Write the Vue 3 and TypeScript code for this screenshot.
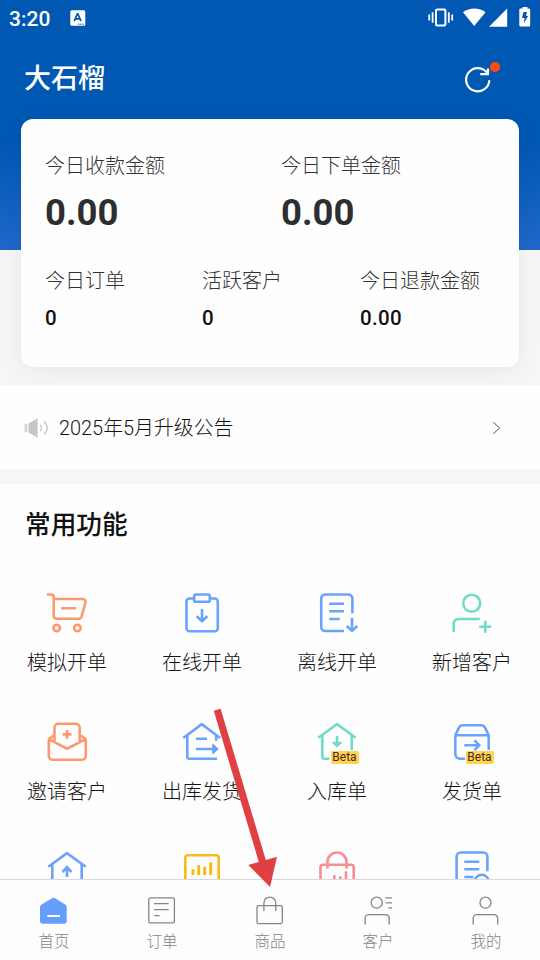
<script setup lang="ts">
interface Stat { label: string; value: string }
interface Feature { label: string; icon: string; tone: string; beta?: boolean }
interface Tab { label: string; icon: string; active?: boolean }

const totals: Stat[] = [
  { label: '今日收款金额', value: '0.00' },
  { label: '今日下单金额', value: '0.00' },
]
const details: Stat[] = [
  { label: '今日订单', value: '0' },
  { label: '活跃客户', value: '0' },
  { label: '今日退款金额', value: '0.00' },
]
const features: Feature[] = [
  { label: '模拟开单', icon: 'cart', tone: 'orange' },
  { label: '在线开单', icon: 'clipboard', tone: 'blue' },
  { label: '离线开单', icon: 'offline', tone: 'blue' },
  { label: '新增客户', icon: 'adduser', tone: 'teal' },
  { label: '邀请客户', icon: 'invite', tone: 'orange' },
  { label: '出库发货', icon: 'outbound', tone: 'blue' },
  { label: '入库单', icon: 'inbound', tone: 'teal', beta: true },
  { label: '发货单', icon: 'box', tone: 'blue', beta: true },
  { label: '', icon: 'houseup', tone: 'blue' },
  { label: '', icon: 'chart', tone: 'amber' },
  { label: '', icon: 'bag', tone: 'pink' },
  { label: '', icon: 'search', tone: 'blue' },
]
const tabs: Tab[] = [
  { label: '首页', icon: 'home', active: true },
  { label: '订单', icon: 'orders' },
  { label: '商品', icon: 'goods' },
  { label: '客户', icon: 'customers' },
  { label: '我的', icon: 'me' },
]
</script>

<template>
  <div class="screen">
    <header class="hero">
      <div class="status">
        <span class="clock">3:20</span>
        <svg class="ime" width="16" height="16" viewBox="0 0 16 16">
          <rect x="0.3" y="0.3" width="15" height="15.4" rx="1.5" fill="#fff" />
          <path d="M4.2 11.2 7.3 3.8h.6l3.1 7.4M5.2 8.8h4.8" fill="none" stroke="#0058b2" stroke-width="1.7" />
          <path d="M8 14.2h6" stroke="#0058b2" stroke-width="1" stroke-dasharray="1.4 .8" />
        </svg>
        <svg class="system" width="104" height="24" viewBox="0 0 104 24">
          <g fill="none" stroke="#fff">
            <rect x="8" y="4.400" width="9.400" height="16" rx="1.200" stroke-width="2" />
            <path d="M4.600 7.200v10.600M20.800 7.200v10.600" stroke-width="1.800" />
            <path d="M1.200 9.500v6M24.200 9.500v6" stroke-width="1.800" />
          </g>
          <g fill="#fff">
            <path d="M35 7.200C41.500 2.300 51.300 2.300 57.500 7.200L46.200 21Z" />
            <path d="M61 21.800 79.200 3.500V21.800Z" />
            <path d="M92.500 3.500h2V2h5v1.500h1.500a1.200 1.200 0 0 1 1.200 1.200v15.600a1.200 1.200 0 0 1-1.200 1.200h-8.500a1.200 1.200 0 0 1-1.200-1.200V4.700a1.200 1.200 0 0 1 1.200-1.200Z" />
          </g>
          <path d="M95.500 7h3.500l-.9 4h2l-4.300 7.500.9-5.500h-2.700Z" fill="#0058b2" />
        </svg>
      </div>
      <div class="titlebar">
        <h1>大石榴</h1>
        <svg class="refresh" width="38" height="36" viewBox="0 0 38 36">
          <path d="M25.500 12.500A11.600 11.600 0 1 0 27.300 19.200" fill="none" stroke="#fff" stroke-width="2.200" />
          <path d="M26 7.500v5.600h-7.800" fill="none" stroke="#fff" stroke-width="2.200" />
          <circle cx="33" cy="6" r="5.100" fill="#ff4a0c" />
        </svg>
      </div>
    </header>

    <section class="card">
      <div class="totals">
        <div v-for="s in totals" :key="s.label" class="stat">
          <span class="label">{{ s.label }}</span>
          <strong class="big">{{ s.value }}</strong>
        </div>
      </div>
      <div class="details">
        <div v-for="s in details" :key="s.label" class="stat">
          <span class="label">{{ s.label }}</span>
          <strong class="small">{{ s.value }}</strong>
        </div>
      </div>
    </section>

    <section class="notice">
      <svg width="26" height="22" viewBox="0 0 26 22">
        <path d="M4.500 6.600 13.600 1.200v19.600L4.500 15.600Z" fill="#c6c6c6" />
        <path d="M2.700 7.200H1.500c-.7 2-.7 5.600 0 7.600h1.200Z" fill="none" stroke="#c6c6c6" stroke-width="1" />
        <path d="M16.300 7.800c1.500 2 1.500 4.400 0 6.400M20 4.600c4.200 3.800 4.200 9 0 12.800" fill="none" stroke="#c6c6c6" stroke-width="1.300" />
      </svg>
      <span class="headline">2025年5月升级公告</span>
      <svg width="10" height="14" viewBox="0 0 10 14">
        <path d="M1.200 1.200 7.700 7 1.200 12.800" fill="none" stroke="#555" stroke-width="1" />
      </svg>
    </section>

    <section class="functions">
      <h2>常用功能</h2>
      <div class="grid">
        <div v-for="f in features" :key="f.icon" class="feature">
          <div class="pic" :class="f.tone">
            <svg width="48" height="48" viewBox="0 0 48 48" fill="none" stroke="currentColor" stroke-width="2.600">
              <g v-if="f.icon === 'cart'">
                <path d="M4 5.500h4.200q2.500 0 2.500 2.500v18.700a3 3 0 0 0 3 3h22a3 3 0 0 0 2.900-2.200l3.900-14.200a2.600 2.600 0 0 0-2.500-3.300H10.700M18 19.300h15" />
                <circle cx="13.700" cy="39" r="3.300" /><circle cx="34.400" cy="39" r="3.300" />
              </g>
              <g v-else-if="f.icon === 'clipboard'">
                <path d="M16 9.500h-4.500a3 3 0 0 0-3 3v26.700a3 3 0 0 0 3 3h25.300a3 3 0 0 0 3-3V12.500a3 3 0 0 0-3-3H32" />
                <rect x="16.200" y="5.500" width="15.600" height="7.300" rx="1.600" />
                <path d="M24 20v12.500M18.700 27.300l5.300 5 5.300-5" />
              </g>
              <g v-else-if="f.icon === 'offline'">
                <path d="M31 42H12.200a4 4 0 0 1-4-4V9.500a4 4 0 0 1 4-4h23.200a4 4 0 0 1 4 4v15M16.300 14.700H31M16.300 22.300H31M16.300 30h10.400M39 28.700v13M33.600 37l5.400 4.800 5.400-4.800" />
              </g>
              <g v-else-if="f.icon === 'adduser'">
                <circle cx="23.700" cy="14.300" r="8.500" />
                <path d="M5.700 43v-8.500a4.500 4.500 0 0 1 4.500-4.500h21.500M37.300 31.700v12M31.300 37.700h12" />
              </g>
              <g v-else-if="f.icon === 'invite'">
                <path d="M11.500 25V9.500a3.800 3.800 0 0 1 3.800-3.800h17.600a3.800 3.800 0 0 1 3.800 3.800V25M11.500 17l-4.700 3.300a2.500 2.500 0 0 0-1 2V38.200a3.500 3.500 0 0 0 3.500 3.500h30a3.500 3.500 0 0 0 3.500-3.500V22.300a2.500 2.500 0 0 0-1-2L36.700 17M6.500 21.300 22.500 30q1.500.8 3 0l16.500-8.700M24.100 12v8.800M19.700 16.400h8.800" />
              </g>
              <g v-else-if="f.icon === 'outbound'">
                <path d="M5.300 20 23.700 6.200 42.200 20M9.300 17.500v21a2.200 2.200 0 0 0 2.200 2.200H39M38.200 17v5.700M18 20.700h11M18 31h19" />
                <path d="m34.800 26.200 5.500 4.800-5.500 4.800Z" fill="currentColor" stroke-width="1" />
              </g>
              <g v-else-if="f.icon === 'inbound'">
                <path d="M5.300 19.800 24 6.200l18.700 13.600M9.300 17.500v21a2.200 2.200 0 0 0 2.200 2.200h5M38.700 17.500V32M24 18v8" />
                <path d="m19.300 24.300 4.700 5 4.700-5Z" fill="currentColor" stroke-width="1" />
              </g>
              <g v-else-if="f.icon === 'box'">
                <path d="M7.300 17.200 11 9.500a4 4 0 0 1 3.500-2.200h19A4 4 0 0 1 37 9.500l3.700 7.700V32M7.300 17.200V36a4.700 4.700 0 0 0 4.700 4.700h5M7.300 17.200h33.400M16.300 27.200h14M26.500 22.300l4.800 4.900-4.800 4.900" />
              </g>
              <g v-else-if="f.icon === 'houseup'">
                <path d="M5.300 19.800 24 6.200l18.700 13.600M9.300 17.500V42h29.400V17.500M24 30V20M19.500 25l4.500-4.800 4.500 4.800" />
              </g>
              <g v-else-if="f.icon === 'chart'">
                <rect x="7.300" y="8.200" width="33.400" height="25.600" rx="2.600" />
                <path d="M15 22.300V28M20.700 18V28M26.700 19.800V28M32.700 15.300V28" stroke-width="3" />
              </g>
              <g v-else-if="f.icon === 'bag'">
                <path d="M10 17.700h28.200a2.500 2.500 0 0 1 2.500 2.500V42H7.500V20.200a2.500 2.500 0 0 1 2.500-2.500ZM14.500 21.500V15a9.500 9.500 0 0 1 19 0v6.500M21.300 28.300v4M27.300 29.300v4M33 24.300v9" />
              </g>
              <g v-else>
                <path d="M24 42H12.600a4 4 0 0 1-4-4V9.500a4 4 0 0 1 4-4h22.800a4 4 0 0 1 4 4V24.200M16.300 14.700h15M16.300 22.300h15M16.300 30h9" />
                <circle cx="33.700" cy="34.800" r="7" />
              </g>
            </svg>
            <span v-if="f.beta" class="beta">Beta</span>
          </div>
          <span class="name">{{ f.label }}</span>
        </div>
      </div>
    </section>

    <nav class="tabs">
      <div v-for="t in tabs" :key="t.icon" class="tab" :class="{ active: t.active }">
        <svg width="28" height="30" viewBox="0 0 28 30" fill="none" stroke="currentColor" stroke-width="1.300">
          <g v-if="t.icon === 'home'">
            <path d="M12 2.300a3 3 0 0 1 3.200 0l10 6.200a3 3 0 0 1 1.500 2.600V25a2.800 2.800 0 0 1-2.800 2.800H2.800A2.800 2.800 0 0 1 0 25V11.100a3 3 0 0 1 1.500-2.600Z" fill="currentColor" stroke="none" />
            <path d="M7.300 20H20" stroke="#fff" stroke-width="2" />
          </g>
          <g v-else-if="t.icon === 'orders'">
            <rect x=".8" y="1.900" width="25.600" height="25" rx="1.500" />
            <path d="M6 7.700h14.700M6 13.600h14.700M6 19.600h5.600" />
          </g>
          <g v-else-if="t.icon === 'goods'">
            <rect x="1" y="9.700" width="25.300" height="17.900" rx="1.500" />
            <path d="M7.900 15V7a5.900 5.900 0 0 1 11.800 0v8" />
          </g>
          <g v-else-if="t.icon === 'customers'">
            <circle cx="12.700" cy="6.700" r="5.500" />
            <path d="M1.200 28.500v-6.300a3.500 3.500 0 0 1 3.500-3.500h17a3.500 3.500 0 0 1 3.500 3.500v6.300M21.300 1.800H28M21.800 6.800H28M24.300 11.800H28" />
          </g>
          <g v-else>
            <circle cx="13.500" cy="6.700" r="5.500" />
            <path d="M1.200 28.500v-6.300a3.500 3.500 0 0 1 3.500-3.500h17.500a3.500 3.500 0 0 1 3.500 3.500v6.300" />
          </g>
        </svg>
        <span>{{ t.label }}</span>
      </div>
    </nav>

    <svg class="pointer" width="66" height="180" viewBox="212 708 66 180">
      <path d="M213.800 710.700 220.600 708.700 265.800 860 277 856.700 270 887 248.300 865 258.800 862Z" fill="#e04041" />
    </svg>
  </div>
</template>

<style>
body { margin: 0; }
</style>

<style scoped>
.screen {
  position: relative;
  display: flex;
  flex-direction: column;
  width: 540px;
  height: 960px;
  overflow: hidden;
  background: #f6f6f6;
  font-family: Roboto, "Noto Sans CJK SC", sans-serif;
  color: #151515;
}
.hero {
  flex: none;
  height: 250px;
  background: linear-gradient(#0058b2 0, #0058b2 140px, #1f68ca 250px);
  color: #fff;
}
.status {
  display: flex;
  align-items: center;
  height: 36px;
  padding: 0 8px 0 9px;
}
.clock { width: 61px; font-size: 21px; line-height: 36px; font-weight: 500; padding-top: 2px; }
.system { margin-left: auto; margin-top: -2px; }
.titlebar {
  display: flex;
  align-items: center;
  justify-content: space-between;
  height: 83px;
  padding: 0 40px 0 24px;
}
h1 { margin: 3px 0 0; font-size: 27px; line-height: 40px; font-weight: 500; }
.refresh { margin-top: 2px; }
.card {
  flex: none;
  position: relative;
  box-sizing: border-box;
  height: 248px;
  margin: -131px 21px 18px;
  padding: 31px 0 0 24px;
  border-radius: 12px;
  background: #fefefe;
  box-shadow: 0 4px 24px rgba(0, 0, 0, .06);
}
.totals { display: grid; grid-template-columns: 236px 1fr; height: 115px; }
.details { display: grid; grid-template-columns: 157px 158px 1fr; }
.stat { display: flex; flex-direction: column; }
.label { font-size: 20px; line-height: 32px; font-weight: 300; color: #333; }
.big { font: 700 36.5px/48px Roboto, sans-serif; color: #2d2e30; margin-top: 7px; }
.small { font: 500 20.5px/28px Roboto, sans-serif; color: #111; margin-top: 7px; letter-spacing: .3px; }
.notice {
  flex: none;
  display: flex;
  align-items: center;
  box-sizing: border-box;
  height: 85px;
  margin-bottom: 14px;
  padding: 0 38px 0 24px;
  background: #fefefe;
}
.headline { flex: 1; margin: 3px 0 0 9px; font-size: 19.9px; line-height: 30px; font-weight: 300; }
.functions { flex: none; height: 395px; overflow: hidden; background: #fefefe; }
h2 { margin: 21px 0 0 25px; font-size: 25.7px; line-height: 40px; font-weight: 500; color: #111; }
.grid { display: grid; grid-template-columns: repeat(4, 135px); grid-auto-rows: 129px; padding-top: 44px; margin-left: -1px; }
.feature { display: flex; flex-direction: column; align-items: center; }
.pic { position: relative; height: 48px; }
.pic svg { display: block; }
.orange { color: #fb9a70; }
.blue { color: #69a3fb; }
.teal { color: #70dcc8; }
.amber { color: #fabb16; }
.pink { color: #f98e92; }
.beta {
  position: absolute;
  left: 18px;
  top: 33px;
  width: 28px;
  border-radius: 2px;
  background: #fcd64f;
  color: #55251c;
  font-size: 12px;
  line-height: 13px;
  text-align: center;
}
.name { margin-top: 11px; padding-left: 1px; font-size: 20px; line-height: 30px; font-weight: 300; }
.tabs {
  flex: none;
  display: grid;
  grid-template-columns: repeat(5, 1fr);
  box-sizing: border-box;
  height: 81px;
  padding-top: 16px;
  border-top: 1px solid #d9d9d9;
  background: #fdfdfd;
  color: #858585;
}
.tab { display: flex; flex-direction: column; align-items: center; font-size: 15.5px; line-height: 24px; font-weight: 300; }
.tab span { margin-top: 4px; }
.active svg { color: #659ffb; }
.pointer { position: absolute; left: 212px; top: 708px; }
</style>
